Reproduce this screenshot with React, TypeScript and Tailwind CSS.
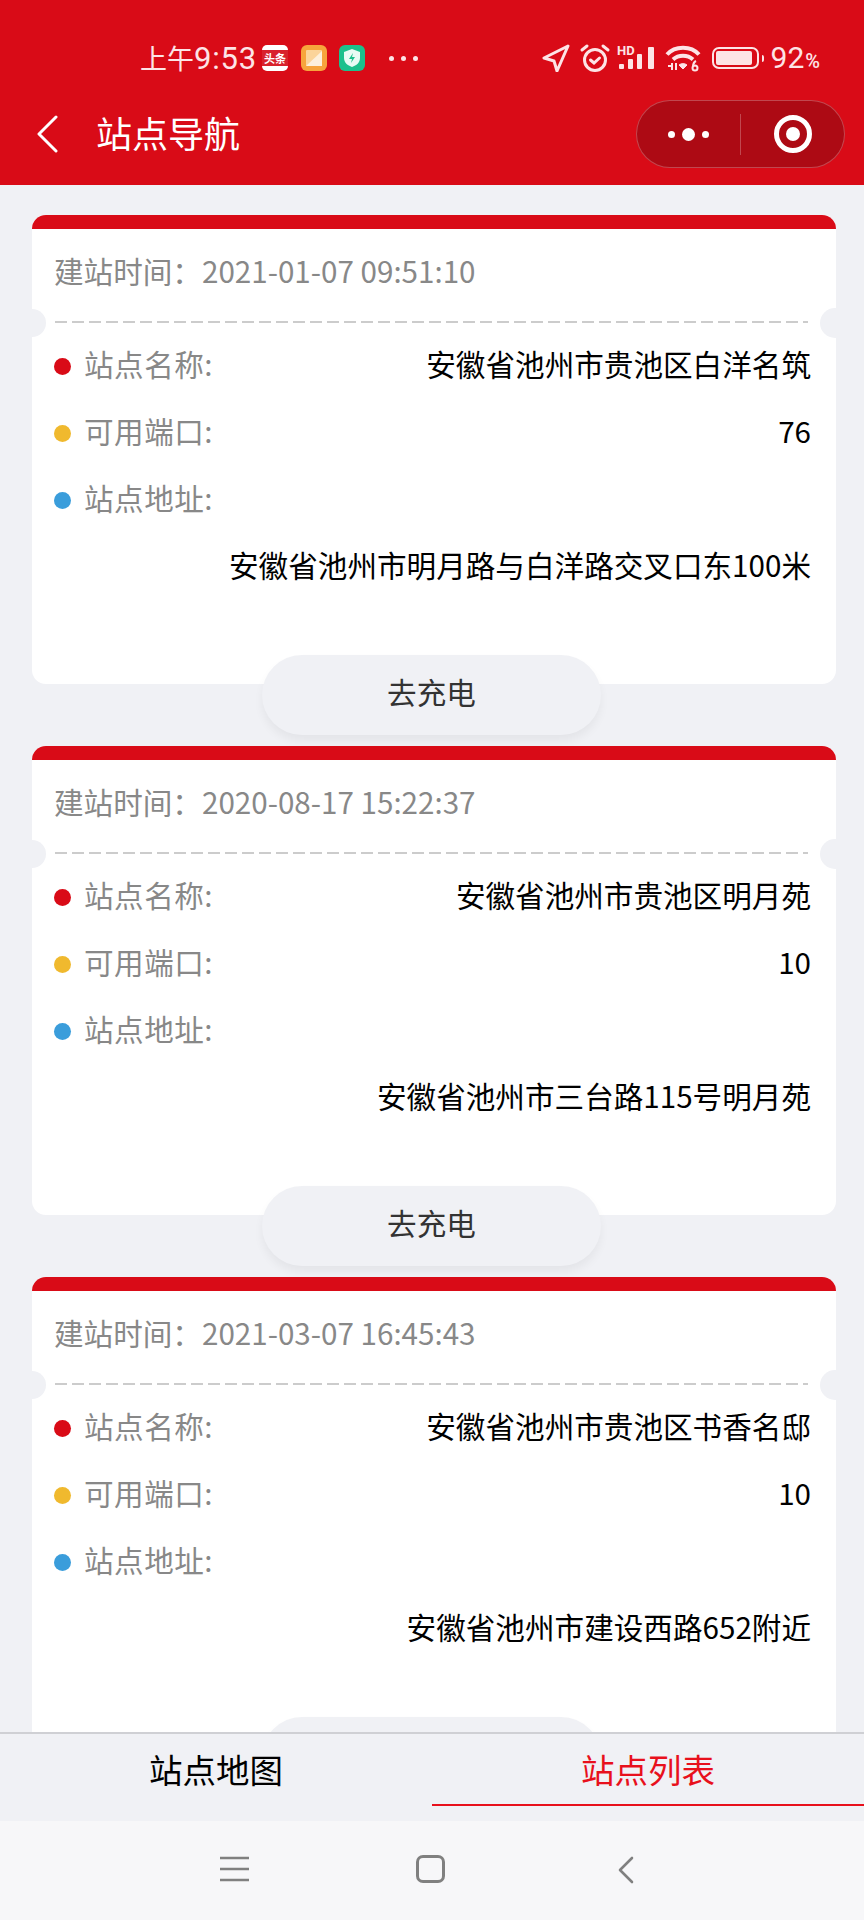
const STATIONS = [
  { time: '2021-01-07 09:51:10', name: '安徽省池州市贵池区白洋名筑', ports: 76, address: '安徽省池州市明月路与白洋路交叉口东100米' },
  { time: '2020-08-17 15:22:37', name: '安徽省池州市贵池区明月苑', ports: 10, address: '安徽省池州市三台路115号明月苑' },
  { time: '2021-03-07 16:45:43', name: '安徽省池州市贵池区书香名邸', ports: 10, address: '安徽省池州市建设西路652附近' },
];

function StatusIcons() {
  return (
    <div className="flex h-[26px] items-center text-[#fde4e6]">
      <svg width="28" height="28" viewBox="0 0 28 28" fill="none" stroke="currentColor" strokeWidth="3" strokeLinejoin="round">
        <path d="M26 2 2 14l10 3 3 10z" />
      </svg>
      <svg width="32" height="30" viewBox="0 0 32 30" fill="none" stroke="currentColor" strokeWidth="3" strokeLinecap="round" className="ml-[9px]">
        <circle cx="16" cy="17" r="10.500" />
        <path d="M11.500 17l3.500 3 5.500-5" />
        <path d="M3 7l5-4M29 7l-5-4" />
      </svg>
      <svg width="38" height="28" viewBox="0 0 38 28" fill="currentColor" className="ml-[6px]">
        <text x="0" y="11" fontSize="13" fontWeight="700" fontFamily="Roboto, sans-serif">HD</text>
        <rect x="2" y="20" width="5" height="5" rx="1" />
        <rect x="11" y="15" width="5" height="10" rx="1" />
        <rect x="20" y="10" width="5" height="15" rx="1" />
        <rect x="31" y="3" width="6" height="22" rx="1" />
      </svg>
      <svg width="36" height="28" viewBox="0 0 36 28" fill="none" stroke="currentColor" strokeWidth="4" className="ml-[10px]">
        <path d="M2 10.500C10 1.500 26 1.500 34 10.500" />
        <path d="M8 15.500c5.500-5 14.500-5 20 0" />
        <path d="M14 21l4 4 4-4c-2-1.800-6-1.800-8 0z" fill="currentColor" strokeWidth="1" />
        <path d="M3 22h5M7 19v7M11 19v7" strokeWidth="2" />
        <circle cx="30" cy="24" r="2.500" strokeWidth="2" />
        <path d="M28 23c0-3 1-5 3-6" strokeWidth="2" />
      </svg>
      <div className="ml-[11px] flex items-center">
        <div className="h-[22px] w-[47px] rounded-[7px] border-[2.500px] border-[#fde4e6] p-[2px]">
          <div className="h-full w-[94%] rounded-[2px] bg-[#fde4e6]" />
        </div>
        <div className="ml-[3px] h-[7px] w-[2px] rounded-r-sm bg-[#fde4e6]" />
      </div>
      <span className="ml-[7px] font-['Roboto',sans-serif] text-[30px] leading-none">
        92<span className="ml-[1px] text-[20px] font-medium">%</span>
      </span>
    </div>
  );
}

function NotifyIcons() {
  return (
    <div className="ml-[5px] flex items-center">
      <div className="flex h-[26px] w-[26px] flex-col justify-center overflow-hidden rounded-[5px] bg-white">
        <div className="flex h-[16px] items-center justify-center bg-[#d8222c] text-[11px] font-bold leading-none text-white">头条</div>
      </div>
      <div className="ml-[13px] flex h-[26px] w-[26px] items-center justify-center rounded-[6px] bg-[#f7a43c]">
        <svg width="16" height="16" viewBox="0 0 16 16">
          <rect width="16" height="16" rx="1" fill="#fbd49a" />
          <path d="M0 16 16 1v15z" fill="#fdf0dc" />
        </svg>
      </div>
      <div className="ml-[12px] flex h-[26px] w-[26px] items-center justify-center rounded-[6px] bg-[#1cc08c]">
        <svg width="16" height="18" viewBox="0 0 16 18">
          <path d="M8 0l8 3v6c0 4.500-3.500 7.500-8 9-4.500-1.500-8-4.500-8-9V3z" fill="#e8fbf4" />
          <path d="M9 4 5 10h3l-1 4 4-6H8z" fill="#1cc08c" />
        </svg>
      </div>
      <div className="ml-[24px] flex items-center gap-[7px]">
        <span className="h-[5px] w-[5px] rounded-full bg-[#fde4e6]" />
        <span className="h-[5px] w-[5px] rounded-full bg-[#fde4e6]" />
        <span className="h-[5px] w-[5px] rounded-full bg-[#fde4e6]" />
      </div>
    </div>
  );
}

function Header() {
  return (
    <div className="h-[185px] shrink-0 bg-[#d90b17]">
      <div className="flex h-[98px] items-start justify-between pl-[140px] pr-[44px] pt-[45px]">
        <div className="flex h-[26px] items-center">
          <span className="leading-none text-[#fde4e6]">
            <span className="text-[27px]">上午</span>
            <span className="font-['Roboto',sans-serif] text-[31px] tracking-[0.8px]">9:53</span>
          </span>
          <NotifyIcons />
        </div>
        <StatusIcons />
      </div>
      <div className="flex h-[72px] items-center pl-[36px] pr-[19px]">
        <svg width="22" height="38" viewBox="0 0 22 38" fill="none" stroke="white" strokeWidth="3" strokeLinecap="round" strokeLinejoin="round">
          <path d="M20 2 3 19l17 17" />
        </svg>
        <span className="mb-[4px] ml-[38px] text-[36px] leading-none text-white">站点导航</span>
        <div className="ml-auto flex h-[68px] w-[209px] items-center rounded-full border border-white/25 bg-[#ad0a14]">
          <div className="flex w-[103px] items-center justify-center gap-[7px]">
            <span className="h-[7px] w-[7px] rounded-full bg-white" />
            <span className="h-[13px] w-[13px] rounded-full bg-white" />
            <span className="h-[7px] w-[7px] rounded-full bg-white" />
          </div>
          <div className="h-[41px] w-px bg-white/25" />
          <div className="flex flex-1 items-center justify-center">
            <div className="flex h-[38px] w-[38px] items-center justify-center rounded-full border-[5px] border-white">
              <div className="h-[14px] w-[14px] rounded-full bg-white" />
            </div>
          </div>
        </div>
      </div>
    </div>
  );
}

function StationCard({ time, name, ports, address }: (typeof STATIONS)[number]) {
  const label = 'mb-[6px] ml-[13px] text-[29.600px] leading-none tracking-[0.5px] text-[#888888]';
  const value = 'mb-[6px] ml-auto text-[29.600px] leading-none text-black';
  return (
    <div className="mb-[11px]">
      <div className="relative ml-[32px] mr-[28px] h-[469px] overflow-hidden rounded-[14px] bg-white">
        <div className="h-[14px] bg-[#d90b17]" />
        <div className="flex h-[92px] items-center pb-[8px] pl-[22px] pr-[25px] text-[29.600px] leading-none text-[#888888]">
          建站时间：{time}
        </div>
        <div className="ml-[23px] mr-[28px] h-[2px] bg-[repeating-linear-gradient(90deg,#cccccc_0,#cccccc_12px,transparent_12px,transparent_17px)]" />
        <div className="absolute left-[-14px] top-[94px] h-[28px] w-[28px] rounded-full bg-[#f0f1f5]" />
        <div className="absolute right-[-14px] top-[93px] h-[30px] w-[30px] rounded-full bg-[#f0f1f5]" />
        <div className="pl-[22px] pr-[25px] pt-[10px]">
          <div className="flex h-[67px] items-center">
            <span className="h-[17px] w-[17px] rounded-full bg-[#d90b17]" />
            <span className={label}>站点名称:</span>
            <span className={value}>{name}</span>
          </div>
          <div className="flex h-[67px] items-center">
            <span className="h-[17px] w-[17px] rounded-full bg-[#f0b92e]" />
            <span className={label}>可用端口:</span>
            <span className={value}>{ports}</span>
          </div>
          <div className="flex h-[67px] items-center">
            <span className="h-[17px] w-[17px] rounded-full bg-[#3a9ddb]" />
            <span className={label}>站点地址:</span>
          </div>
          <div className="flex h-[67px] items-center">
            <span className={value}>{address}</span>
          </div>
        </div>
      </div>
      <div className="relative ml-[262px] -mt-[29px] flex h-[80px] w-[339px] items-center justify-center rounded-full bg-[#f0f1f5] pb-[7px] text-[29.600px] leading-none text-[#333333] shadow-[0_6px_10px_rgba(0,0,0,0.05)]">
        去充电
      </div>
    </div>
  );
}

function Tabs() {
  return (
    <div className="flex h-[89px] shrink-0 border-t-2 border-[#cfd0d4] bg-[#f0f1f5]">
      <div className="flex flex-1 items-center justify-center pb-[18px] text-[33.500px] leading-none text-black">站点地图</div>
      <div className="relative flex flex-1 items-center justify-center pb-[18px] text-[33.500px] leading-none text-[#e8101c]">
        站点列表
        <div className="absolute bottom-[15px] left-0 right-0 h-[2px] bg-[#e8101c]" />
      </div>
    </div>
  );
}

function SystemNav() {
  return (
    <div className="flex h-[99px] shrink-0 items-start bg-[#f7f7f9] pt-[35px]">
      <svg width="30" height="26" viewBox="0 0 30 26" stroke="#808080" strokeWidth="2.600" className="ml-[220px]">
        <path d="M0 2h29M0 13h29M0 24h29" />
      </svg>
      <div className="ml-[166px] mt-[-1px] h-[28px] w-[29px] rounded-[7px] border-[3px] border-[#808080]" />
      <svg width="18" height="28" viewBox="0 0 18 28" fill="none" stroke="#808080" strokeWidth="2.600" strokeLinecap="round" strokeLinejoin="round" className="ml-[172px]">
        <path d="M15 2 3 14l12 12" />
      </svg>
    </div>
  );
}

export default function App() {
  return (
    <div className="flex h-[1920px] w-[864px] flex-col overflow-hidden bg-[#f0f1f5] font-['Noto_Sans_CJK_SC','Noto_Sans',sans-serif]">
      <Header />
      <div className="min-h-0 flex-1 overflow-hidden pt-[30px]">
        {STATIONS.map((s) => (
          <StationCard key={s.time} {...s} />
        ))}
      </div>
      <Tabs />
      <SystemNav />
    </div>
  );
}
